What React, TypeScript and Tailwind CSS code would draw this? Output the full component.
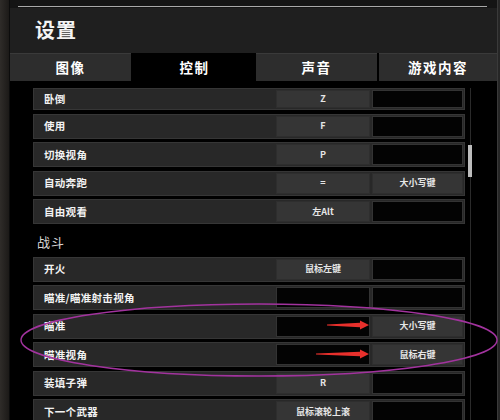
import React from 'react';

type Binding = { label: string; k1?: string; k2?: string };

const moveRows: Binding[] = [
  { label: '卧倒', k1: 'Z' },
  { label: '使用', k1: 'F' },
  { label: '切换视角', k1: 'P' },
  { label: '自动奔跑', k1: '=', k2: '大小写键' },
  { label: '自由观看', k1: '左Alt' },
];

const combatRows: Binding[] = [
  { label: '开火', k1: '鼠标左键' },
  { label: '瞄准/瞄准射击视角' },
  { label: '瞄准', k2: '大小写键' },
  { label: '瞄准视角', k2: '鼠标右键' },
  { label: '装填子弹', k1: 'R' },
  { label: '下一个武器', k1: '鼠标滚轮上滚' },
];

const font = { fontFamily: '"Noto Sans CJK SC", "Noto Sans", sans-serif' };

function KeyCell({ value, w }: { value?: string; w: string }) {
  return (
    <div
      className={`${w} h-full flex items-center justify-center text-[9px] font-bold text-[#e6e6e6] border ${
        value ? 'bg-[#353535] border-[#2e2e2e]' : 'bg-[#030303] border-[#333]'
      }`}
    >
      {value}
    </div>
  );
}

function Row({ b, first }: { b: Binding; first?: boolean }) {
  return (
    <div
      className={`shrink-0 flex items-stretch w-[432px] ${first ? 'h-[22px]' : 'h-[25px]'} mb-[3.5px] bg-[#282828] border border-[#363636] p-[1px] pl-[10px]`}
    >
      <div className="flex-1 flex items-center text-[10.5px] font-bold tracking-[0.3px] text-[#f2f2f2]">{b.label}</div>
      <KeyCell value={b.k1} w="w-[94px]" />
      <div className="w-[2px]" />
      <KeyCell value={b.k2} w="w-[91px]" />
    </div>
  );
}

const tabs = [
  { name: '图像', w: 'w-[121px]' },
  { name: '控制', w: 'w-[123px]', active: true },
  { name: '声音', w: 'w-[121px]' },
  { name: '游戏内容', w: 'flex-1' },
];

export default function App() {
  return (
    <div className="relative w-[500px] h-[420px] overflow-hidden flex bg-[#161616]" style={font}>
      <div className="w-[10px] h-full bg-gradient-to-r from-[#2f2c29] to-[#1c1a18] border-r border-[#0c0c0c]" />
      <div className="w-[487px] h-full flex flex-col overflow-hidden">
        <div className="shrink-0 h-[8px] bg-[#141414] flex items-start pt-[6px] pl-[8px] pr-[10px]">
          <div className="h-[1px] w-full bg-[#a8a8a8]" />
        </div>
        <div className="shrink-0 h-[45px] bg-[#1f1f1f] flex items-center pl-[25px] pb-[2px]">
          <span className="text-[20px] font-bold tracking-[1px] text-[#f4f4f4]">设置</span>
        </div>
        <div className="shrink-0 h-[28px] flex bg-black">
          {tabs.map((t) => (
            <div
              key={t.name}
              className={`${t.w} flex items-center justify-center text-[13.5px] font-bold tracking-[1.5px] text-white ${
                t.active ? 'bg-black' : 'bg-[#2d2d2d] border-t border-[#3a3a3a] mr-[2px] last:mr-0'
              }`}
            >
              {t.name}
            </div>
          ))}
        </div>
        <div className="flex-1 min-h-0 bg-black flex pt-[7px] pl-[23px] overflow-hidden">
          <div className="flex flex-col">
            {moveRows.map((b, i) => (
              <Row key={b.label} b={b} first={i === 0} />
            ))}
            <div className="shrink-0 h-[29px] flex items-center pl-[4px] text-[13px] text-[#d8d8d8] tracking-[1px]">战斗</div>
            {combatRows.map((b) => (
              <Row key={b.label} b={b} />
            ))}
          </div>
          <div className="ml-[3px] w-[5px] flex justify-center">
            <div className="w-[1px] bg-[#2a2a2a] relative">
              <div className="absolute left-[-2px] top-[57px] w-[4px] h-[32px] bg-[#bdbdbd]" />
            </div>
          </div>
        </div>
      </div>
      <div className="flex-1 bg-[#262626] border-l border-[#3a3a3a]" />

      <svg className="absolute inset-0 pointer-events-none" width="500" height="420" viewBox="0 0 500 420">
        <ellipse cx="259" cy="340" rx="238" ry="36" fill="none" stroke="#a2339e" strokeWidth="1.4" />
        <polygon points="327,324.4 360,322.8 360,320.5 369,325 360,329.5 360,327.2 327,325.6" fill="#e8302c" />
        <polygon points="316,353.4 360,351.8 360,349.5 369,354 360,358.5 360,356.2 316,354.6" fill="#e8302c" />
      </svg>
    </div>
  );
}
